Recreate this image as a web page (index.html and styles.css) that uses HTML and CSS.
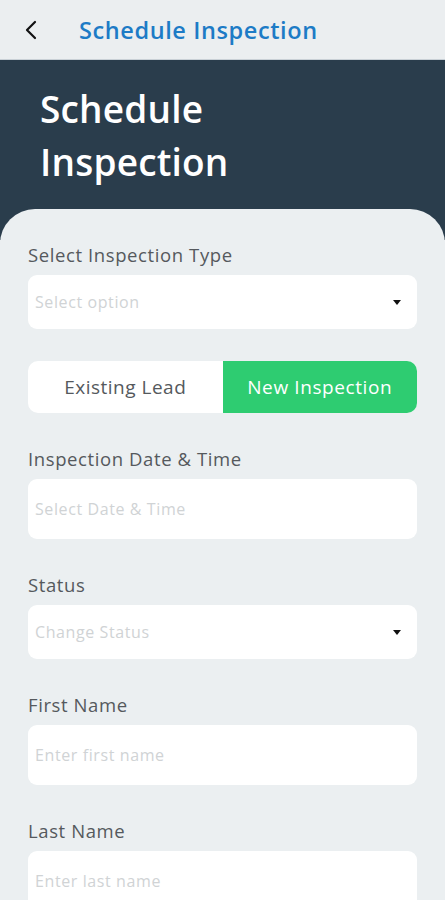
FILE: index.html
```html
<!DOCTYPE html>
<html>
<head>
<meta charset="utf-8">
<link rel="stylesheet" href="styles.css">
</head>
<body>
<div class="app">
  <header class="topbar">
    <button class="back" aria-label="Back">
      <svg width="14" height="20" viewBox="0 0 14 20"><path d="M11 2 L3 10 L11 18" fill="none" stroke="#111" stroke-width="2.2" stroke-linecap="round" stroke-linejoin="round"/></svg>
    </button>
    <div class="topbar-title">Schedule Inspection</div>
  </header>
  <section class="hero">
    <h1 class="hero-title">Schedule<br>Inspection</h1>
  </section>
  <main class="card">
    <div class="field">
      <label class="label">Select Inspection Type</label>
      <div class="input select"><span class="ph">Select option</span><span class="caret"></span></div>
    </div>
    <div class="toggle">
      <div class="tab">Existing Lead</div>
      <div class="tab active">New Inspection</div>
    </div>
    <div class="field">
      <label class="label">Inspection Date &amp; Time</label>
      <div class="input tall"><span class="ph">Select Date &amp; Time</span></div>
    </div>
    <div class="field">
      <label class="label">Status</label>
      <div class="input select"><span class="ph">Change Status</span><span class="caret"></span></div>
    </div>
    <div class="field">
      <label class="label">First Name</label>
      <div class="input tall"><span class="ph">Enter first name</span></div>
    </div>
    <div class="field">
      <label class="label">Last Name</label>
      <div class="input tall"><span class="ph">Enter last name</span></div>
    </div>
  </main>
</div>
</body>
</html>
```
FILE: styles.css
```css
* { box-sizing: border-box; }
html, body { margin: 0; padding: 0; }
body {
  font-family: "Open Sans", "Noto Sans", sans-serif;
  background: #ebeef0;
  width: 445px;
  height: 900px;
  overflow: hidden;
}
.app { display: flex; flex-direction: column; }
.topbar {
  height: 60px;
  display: flex;
  align-items: center;
  background: #ebeef0;
  border-bottom: 1px solid #c9d0d6;
}
.back {
  border: 0; background: none; padding: 0;
  margin-left: 23px;
  width: 16px; height: 22px;
  display: flex; align-items: center; justify-content: center;
}
.topbar-title {
  margin-left: 40px;
  color: #1d7bc6;
  font-size: 23.5px;
  font-weight: 600;
  letter-spacing: 0.6px;
}
.hero {
  background: #2a3d4c;
  padding: 22px 40px 0;
  height: 180px;
}
.hero-title {
  margin: 0;
  color: #fff;
  font-size: 37px;
  font-weight: 600;
  line-height: 53px;
  letter-spacing: 0.2px;
}
.card {
  background: #ebeff1;
  margin-top: -31px;
  border-radius: 35px 35px 0 0;
  padding: 33px 28px 0;
  display: flex;
  flex-direction: column;
  gap: 32px;
}
.toggle + .field { margin-top: 1px; }
.field + .field { margin-top: 1px; }
.field { display: flex; flex-direction: column; gap: 8px; }
.label {
  color: #55595d;
  font-size: 18.5px;
  line-height: 25px;
  letter-spacing: 0.6px;
}
.input {
  background: #fff;
  border-radius: 9px;
  height: 54px;
  display: flex;
  align-items: center;
  padding: 0 16px 0 7px;
}
.input.tall { height: 60px; }
.ph { color: #d0d3d5; font-size: 16px; letter-spacing: 0.6px; flex: 1; }
.caret {
  width: 0; height: 0;
  border-left: 4.5px solid transparent;
  border-right: 4.5px solid transparent;
  border-top: 5px solid #111;
}
.toggle {
  display: flex;
  height: 52px;
  border-radius: 10px;
  overflow: hidden;
  background: #fff;
}
.tab {
  flex: 1;
  display: flex; align-items: center; justify-content: center;
  font-size: 19px;
  letter-spacing: 0.5px;
  color: #55595d;
}
.tab.active { background: #2ecc71; color: #fff; font-weight: 500; letter-spacing: 0.6px; }
```
